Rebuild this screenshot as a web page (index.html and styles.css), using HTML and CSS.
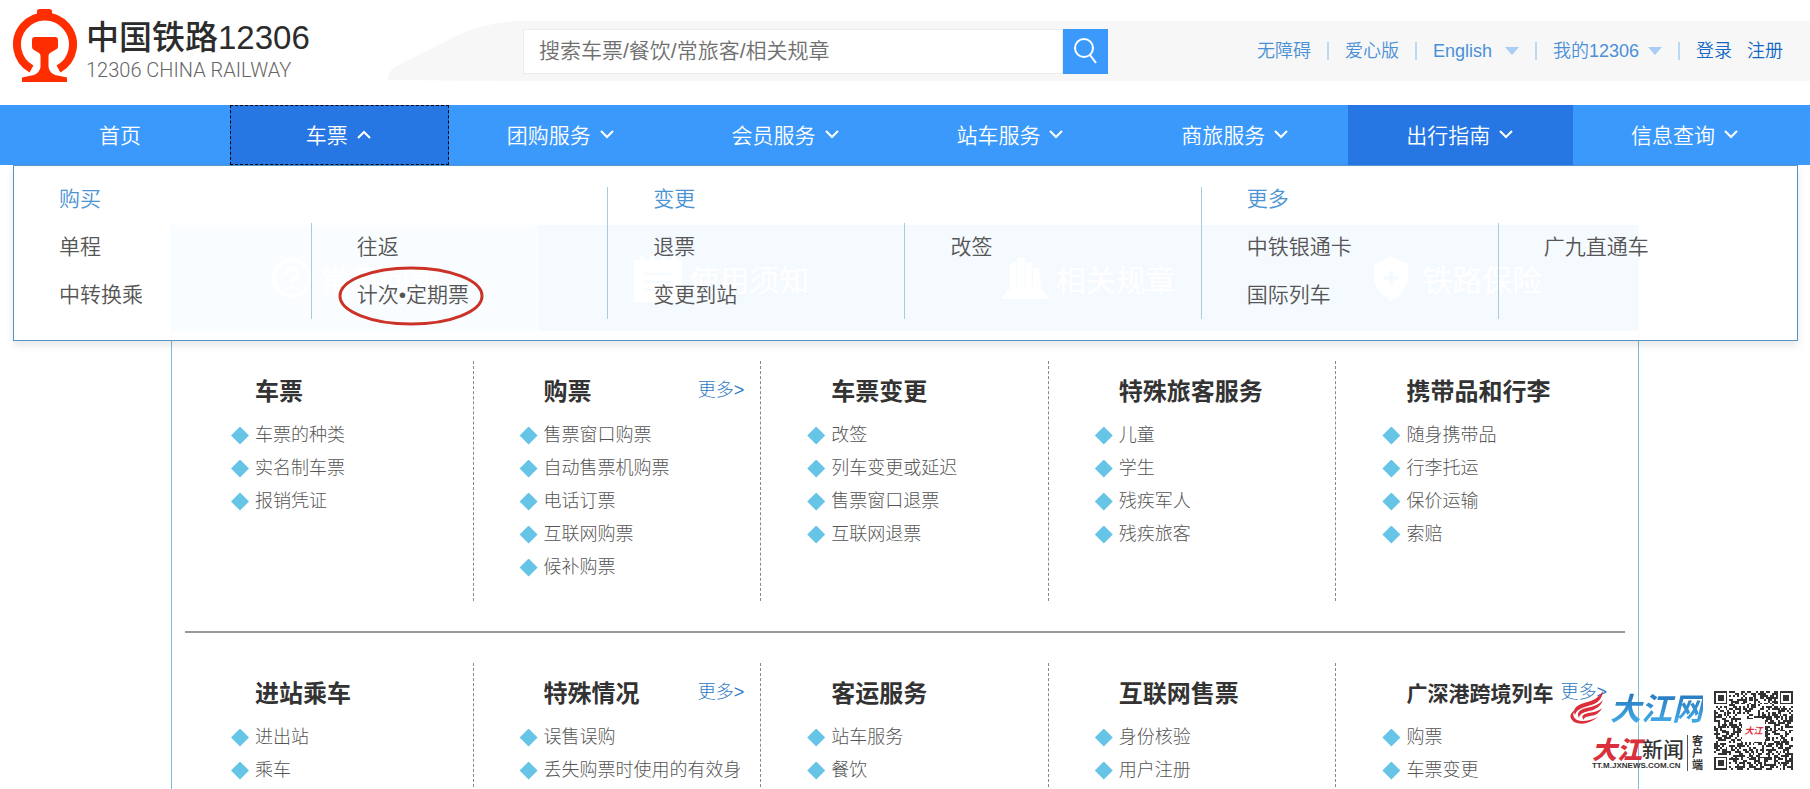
FILE: index.html
```html
<!DOCTYPE html>
<html lang="zh-CN">
<head>
<meta charset="utf-8">
<meta name="viewport" content="width=device-width, initial-scale=1">
<title>中国铁路12306</title>
<link rel="stylesheet" href="styles.css">
</head>
<body>
<div class="page">
  <header class="header">
    <a class="logo" href="#">
      <svg class="logo-mark" viewBox="0 0 64 74" aria-hidden="true">
        <path d="M18.5 60A28 28 0 1 1 45.5 60" fill="none" stroke="#ff2e00" stroke-width="8"/>
        <path fill="#ff2e00" d="M24 2Q24 0 27 0H36Q39 0 39 2V9H24ZM22 28H42Q45 28 45 31V38Q45 40 42 41L37 44Q35.500 45 35.500 47V58Q36 63 42 66L54 68.500V73H9V68.500L21 66Q27 63 27.500 58V47Q27.500 45 26 44L21 41Q19 40 19 38V31Q19 28 22 28Z"/>
      </svg>
      <span class="logo-words">
        <span class="logo-name">中国铁路12306</span>
        <span class="logo-sub">12306 CHINA RAILWAY</span>
      </span>
    </a>
    <div class="band">
      <svg class="band-wedge" viewBox="0 0 135 60" preserveAspectRatio="none" aria-hidden="true">
        <path fill="#f7f7f7" d="M0 59Q0 50 7 46L70 14Q98 1 135 0V60Z"/>
      </svg>
      <div class="band-body">
        <form class="search">
          <input class="search-input" type="text" aria-label="搜索" placeholder="搜索车票/餐饮/常旅客/相关规章">
          <button class="search-button" type="button" aria-label="搜索">
            <svg width="24" height="26" viewBox="0 0 24 26" fill="none" stroke="#fff" stroke-width="2" aria-hidden="true"><circle cx="10" cy="10" r="9"/><path d="M16 17L22 25"/></svg>
          </button>
        </form>
        <nav class="top-links" aria-label="快捷入口">
          <a href="#">无障碍</a><i class="bar"></i>
          <a href="#">爱心版</a><i class="bar"></i>
          <a class="wide" href="#">English<i class="tri"></i></a><i class="bar"></i>
          <a href="#">我的12306<i class="tri"></i></a><i class="bar"></i>
          <a class="strong" href="#">登录</a>
          <a class="strong" href="#">注册</a>
        </nav>
      </div>
    </div>
  </header>

  <div class="nav-wrap">
    <nav class="nav" aria-label="主导航">
      <a class="nav-item" href="#">首页</a>
      <a class="nav-item dark open" href="#">车票<svg class="chev" viewBox="0 0 14 9"><path d="M1 8L7 2L13 8"/></svg></a>
      <a class="nav-item" href="#">团购服务<svg class="chev" viewBox="0 0 14 9"><path d="M1 1L7 7L13 1"/></svg></a>
      <a class="nav-item" href="#">会员服务<svg class="chev" viewBox="0 0 14 9"><path d="M1 1L7 7L13 1"/></svg></a>
      <a class="nav-item" href="#">站车服务<svg class="chev" viewBox="0 0 14 9"><path d="M1 1L7 7L13 1"/></svg></a>
      <a class="nav-item" href="#">商旅服务<svg class="chev" viewBox="0 0 14 9"><path d="M1 1L7 7L13 1"/></svg></a>
      <a class="nav-item dark" href="#">出行指南<svg class="chev" viewBox="0 0 14 9"><path d="M1 1L7 7L13 1"/></svg></a>
      <a class="nav-item" href="#">信息查询<svg class="chev" viewBox="0 0 14 9"><path d="M1 1L7 7L13 1"/></svg></a>
    </nav>
    <div class="menu">
      <section class="menu-group">
        <h2 class="menu-title">购买</h2>
        <div class="menu-cols">
          <div class="menu-col"><a href="#">单程</a><a href="#">中转换乘</a></div>
          <div class="menu-col"><a href="#">往返</a><a class="circled" href="#">计次•定期票<svg class="ring" viewBox="0 0 146 60" aria-hidden="true"><ellipse cx="73" cy="30" rx="71" ry="28"/></svg></a></div>
        </div>
      </section>
      <section class="menu-group">
        <h2 class="menu-title">变更</h2>
        <div class="menu-cols">
          <div class="menu-col"><a href="#">退票</a><a href="#">变更到站</a></div>
          <div class="menu-col"><a href="#">改签</a></div>
        </div>
      </section>
      <section class="menu-group">
        <h2 class="menu-title">更多</h2>
        <div class="menu-cols">
          <div class="menu-col"><a href="#">中铁银通卡</a><a href="#">国际列车</a></div>
          <div class="menu-col"><a href="#">广九直通车</a></div>
        </div>
      </section>
    </div>
  </div>

  <main class="guide">
    <nav class="tabs" aria-label="出行指南">
      <a class="tab current" href="#"><svg width="42" height="48" viewBox="0 0 42 48" fill="none" stroke="#fff" stroke-width="4"><circle cx="21" cy="24" r="18"/><path d="M15 20Q15 14 21 14T27 20Q27 23 21 26V29M21 32V36"/></svg>常见问题</a>
      <a class="tab" href="#"><svg width="48" height="48" viewBox="0 0 48 48"><path fill="#fff" d="M0 6H6V2H10V6H16V2H20V6H27V2H31V6H38V2H42V6H48V48H0Z"/><path stroke="#3b99fc" stroke-width="2" d="M11 20H37M11 28H37M11 36H28"/></svg>使用须知</a>
      <a class="tab" href="#"><svg width="48" height="48" viewBox="0 0 48 48" fill="#fff"><path d="M9 10L15 8V36H9ZM16 4H24V36H16ZM25 8H31V36H25ZM32 14L38 13L40 36H32ZM6 36H42L48 45H0Z"/></svg>相关规章</a>
      <a class="tab" href="#"><svg width="48" height="48" viewBox="0 0 48 48"><path fill="#fff" d="M24 2Q32 8 41 9V26Q39 38 24 47Q9 38 7 26V9Q16 8 24 2Z"/><path stroke="#3b99fc" stroke-width="4" d="M24 17V31M17 24H31"/></svg>铁路保险</a>
    </nav>
    <div class="topics">
      <div class="topic-row">
        <section class="topic">
          <div class="topic-head"><h3>车票</h3></div>
          <ul><li><a href="#">车票的种类</a></li><li><a href="#">实名制车票</a></li><li><a href="#">报销凭证</a></li></ul>
        </section>
        <section class="topic">
          <div class="topic-head"><h3>购票</h3><a class="more" href="#">更多&gt;</a></div>
          <ul><li><a href="#">售票窗口购票</a></li><li><a href="#">自动售票机购票</a></li><li><a href="#">电话订票</a></li><li><a href="#">互联网购票</a></li><li><a href="#">候补购票</a></li></ul>
        </section>
        <section class="topic">
          <div class="topic-head"><h3>车票变更</h3></div>
          <ul><li><a href="#">改签</a></li><li><a href="#">列车变更或延迟</a></li><li><a href="#">售票窗口退票</a></li><li><a href="#">互联网退票</a></li></ul>
        </section>
        <section class="topic">
          <div class="topic-head"><h3>特殊旅客服务</h3></div>
          <ul><li><a href="#">儿童</a></li><li><a href="#">学生</a></li><li><a href="#">残疾军人</a></li><li><a href="#">残疾旅客</a></li></ul>
        </section>
        <section class="topic">
          <div class="topic-head"><h3>携带品和行李</h3></div>
          <ul><li><a href="#">随身携带品</a></li><li><a href="#">行李托运</a></li><li><a href="#">保价运输</a></li><li><a href="#">索赔</a></li></ul>
        </section>
      </div>
      <hr class="rule">
      <div class="topic-row">
        <section class="topic">
          <div class="topic-head"><h3>进站乘车</h3></div>
          <ul><li><a href="#">进出站</a></li><li><a href="#">乘车</a></li></ul>
        </section>
        <section class="topic">
          <div class="topic-head"><h3>特殊情况</h3><a class="more" href="#">更多&gt;</a></div>
          <ul><li><a href="#">误售误购</a></li><li><a href="#">丢失购票时使用的有效身</a></li></ul>
        </section>
        <section class="topic">
          <div class="topic-head"><h3>客运服务</h3></div>
          <ul><li><a href="#">站车服务</a></li><li><a href="#">餐饮</a></li></ul>
        </section>
        <section class="topic">
          <div class="topic-head"><h3>互联网售票</h3></div>
          <ul><li><a href="#">身份核验</a></li><li><a href="#">用户注册</a></li></ul>
        </section>
        <section class="topic">
          <div class="topic-head"><h3 class="long">广深港跨境列车</h3><a class="more" href="#">更多&gt;</a></div>
          <ul><li><a href="#">购票</a></li><li><a href="#">车票变更</a></li></ul>
        </section>
      </div>
    </div>
  </main>

  <aside class="badge" aria-label="大江网">
    <div class="badge-words">
      <div class="badge-top">
        <svg width="34" height="34" viewBox="0 0 34 34" aria-hidden="true"><g fill="#d9303c"><path d="M33 0Q32 12 18 15Q6 18 5 24Q1 16 14 12Q28 9 33 0Z"/><path d="M33 9Q30 18 19 20Q9 22 9 27Q5 20 16 17Q28 15 33 9Z"/><path d="M32 17Q29 24 20 25Q13 26 14 29Q9 24 18 22Q28 21 32 17Z"/><path d="M8 17Q-1 24 7 29Q15 32 28 26Q15 36 4 31Q-5 24 8 17Z"/></g></svg>
        <span class="badge-site">大江网</span>
      </div>
      <div class="badge-bottom">
        <div>
          <div class="badge-news"><b>大江</b><span>新闻</span></div>
          <div class="badge-url">TT.M.JXNEWS.COM.CN</div>
        </div>
        <div class="badge-client">客户端</div>
      </div>
    </div>
    <div class="qr"><svg id="qr" viewBox="0 0 41 41" shape-rendering="crispEdges" role="img" aria-label="二维码"></svg><span class="qr-label">大江</span></div>
  </aside>
</div>
<script src="qr.js"></script>
</body>
</html>
```

FILE: styles.css
```css
* { box-sizing: border-box; }

body {
  margin: 0;
  background: #fff;
  color: #555;
  font-family: "Liberation Sans", "Noto Sans CJK SC", sans-serif;
  font-size: 18px;
  font-weight: 350;
}

a { color: inherit; text-decoration: none; }
h2, h3, ul { margin: 0; padding: 0; font-weight: inherit; }
ul { list-style: none; }

.page { position: relative; height: 100vh; overflow: hidden; }

/* Header */
.header { display: flex; height: 105px; }
.logo { display: flex; flex: 0 0 388px; gap: 9px; padding: 9px 0 0 13px; }
.logo-mark { width: 64px; height: 74px; }
.logo-words { display: flex; flex-direction: column; padding-top: 9px; }
.logo-name { color: #2c2c2c; font-size: 33px; line-height: 40px; font-weight: 500; white-space: nowrap; }
.logo-sub { color: #666; font-family: Roboto, "Liberation Sans", sans-serif; font-size: 20px; line-height: 24px; font-weight: 300; white-space: nowrap; }

.band { display: flex; flex: 1; height: 60px; margin-top: 21px; }
.band-wedge { flex: 0 0 135px; width: 135px; height: 60px; }
.band-body { display: flex; flex: 1; align-items: center; justify-content: space-between; padding-right: 27px; background: #f7f7f7; }
.search { display: flex; flex: 0 1 585px; height: 45px; }
.search-input {
  flex: 1; min-width: 0; padding: 0 15px;
  border: 1px solid #ececec; background: #fff; color: #666;
  font-family: inherit; font-size: 21px; font-weight: inherit;
}
.search-input::placeholder { color: #707070; }
.search-button { display: flex; align-items: center; justify-content: center; width: 45px; padding: 0; border: 0; background: #3b99fc; }

.top-links { display: flex; align-items: center; color: #4a90d6; line-height: 24px; white-space: nowrap; }
.top-links a { display: flex; align-items: center; }
.bar { width: 2px; height: 18px; margin: 0 16px; background: #bcd8f4; }
.tri { margin-left: 9px; border: 7px solid transparent; border-top: 8px solid #a9cdf3; border-bottom: 0; }
.wide .tri { margin-left: 13px; }
.top-links .strong { color: #1467c4; }
.strong + .strong { margin-left: 15px; }

/* Main navigation */
.nav-wrap { position: relative; }
.nav { display: grid; grid-template-columns: 218fr 219fr repeat(6, 225fr); height: 60px; padding: 0 12px; background: #3b99fc; }
.nav-item { display: flex; align-items: center; justify-content: center; gap: 9px; padding: 0 2px 2px 0; color: #fff; font-size: 21px; }
.nav-item.dark { background: #2676e3; }
.nav-item.open { outline: 1px dashed #000; outline-offset: -1px; }
.chev { width: 14px; height: 9px; fill: none; stroke: #fff; stroke-width: 2; }

/* Drop-down menu */
.menu {
  position: absolute; z-index: 2; top: 100%; left: 13px; right: 12px;
  display: grid; grid-template-columns: repeat(3, 1fr);
  padding: 21px 3px 21px 0;
  border: 1px solid #5596c8;
  background: rgba(255, 255, 255, 0.95);
  box-shadow: 0 4px 8px rgba(0, 0, 0, 0.1);
  font-size: 21px;
}
.menu-group + .menu-group { border-left: 1px solid #a9cbdc; }
.menu-title { margin-bottom: 12px; padding-left: 45px; color: #4a94d4; font-size: 21px; line-height: 24px; }
.menu-cols { display: grid; grid-template-columns: 1fr 1fr; height: 96px; }
.menu-col { padding-left: 45px; line-height: 48px; }
.menu-col + .menu-col { border-left: 1px solid #a9cbdc; }
.menu-col a { display: block; width: max-content; }
.circled { position: relative; }
.ring { position: absolute; top: -5px; left: -19px; width: 146px; height: 60px; fill: none; stroke: #cc3328; stroke-width: 3; }

/* Travel guide */
.guide { max-width: 1468px; margin: 60px auto 0; border: 1px solid #7dbbd0; border-width: 0 1px; }
.tabs { display: grid; grid-template-columns: repeat(4, 1fr); height: 106px; background: #3b99fc; }
.tab { display: flex; align-items: center; justify-content: center; gap: 7px; color: #fff; font-size: 30px; font-weight: 400; }
.tab.current { background: #8cd4f0; }

.topics { padding: 30px 13px; }
.topic-row { display: grid; grid-template-columns: repeat(5, 1fr); padding-right: 2px; }
.topic { height: 240px; padding-top: 15px; font-weight: 300; }
.topic + .topic { border-left: 1px dashed #888; }
.topic-head { display: flex; justify-content: space-between; height: 32px; padding: 0 16px 0 70px; line-height: 32px; }
.topic-head h3 { color: #333; font-size: 24px; font-weight: 700; white-space: nowrap; }
.topic-head .long { font-size: 21px; }
.more { color: #2c78c2; line-height: 28px; white-space: nowrap; }
.topic ul { margin-top: 11px; }
.topic li { display: flex; align-items: center; gap: 6px; padding-left: 46px; line-height: 33px; white-space: nowrap; }
.topic li::before { content: ""; width: 18px; height: 18px; background: #66c5e6; clip-path: polygon(50% 0, 100% 50%, 50% 100%, 0 50%); }
.rule { height: 2px; margin: 30px 0; border: 0; background: #999; }

/* Publisher badge */
.badge { position: absolute; z-index: 3; right: 17px; bottom: 18px; display: flex; gap: 11px; color: #333; }
.badge-words { display: flex; flex-direction: column; gap: 6px; }
.badge-top { display: flex; gap: 6px; }
.badge-site {
  background: linear-gradient(#2375bd, #49b4ee); background-clip: text; color: transparent;
  font-size: 31px; line-height: 38px; font-weight: 700; font-style: italic;
}
.badge-bottom { display: flex; justify-content: flex-end; gap: 3px; }
.badge-news { display: flex; align-items: center; height: 26px; font-size: 21px; font-weight: 500; }
.badge-news b { color: #d9303c; font-size: 25px; font-weight: 900; font-style: italic; }
.badge-url { font-size: 8px; line-height: 10px; font-weight: 700; }
.badge-client { width: 16px; padding-left: 4px; border-left: 1px solid #555; font-size: 11px; line-height: 12px; font-weight: 700; word-break: break-all; }
.qr { position: relative; width: 79px; height: 79px; }
.qr svg { display: block; width: 100%; height: 100%; }
.qr-label {
  position: absolute; inset: 28px; display: flex; align-items: center; justify-content: center;
  background: #fff; color: #d9303c; font-size: 9px; font-weight: 700; font-style: italic; white-space: nowrap;
}
```

FILE: qr.js
```js
// Fills the code's data modules and its three finder squares.
(function () {
  var n = 41, seed = 12306, d = "";
  function rnd() { seed = (seed * 1103515245 + 12345) % 2147483648; return seed / 2147483648; }
  function finder(x, y) {
    if (x > 7 && x < n - 8) return null;
    if (y > 7 && (y < n - 8 || x > 7)) return null;
    var fx = x > 7 ? x - (n - 7) : x, fy = y > 7 ? y - (n - 7) : y;
    if (fx < 0 || fy < 0 || fx > 6 || fy > 6) return false;
    var r = Math.max(Math.abs(fx - 3), Math.abs(fy - 3));
    return r !== 2;
  }
  for (var y = 0; y < n; y++) {
    for (var x = 0; x < n; x++) {
      var f = finder(x, y), on = rnd() < 0.5;
      if (f === null ? on : f) d += "M" + x + " " + y + "h1v1h-1z";
    }
  }
  var p = document.createElementNS("http://www.w3.org/2000/svg", "path");
  p.setAttribute("d", d);
  p.setAttribute("fill", "#333");
  document.getElementById("qr").appendChild(p);
})();
```
